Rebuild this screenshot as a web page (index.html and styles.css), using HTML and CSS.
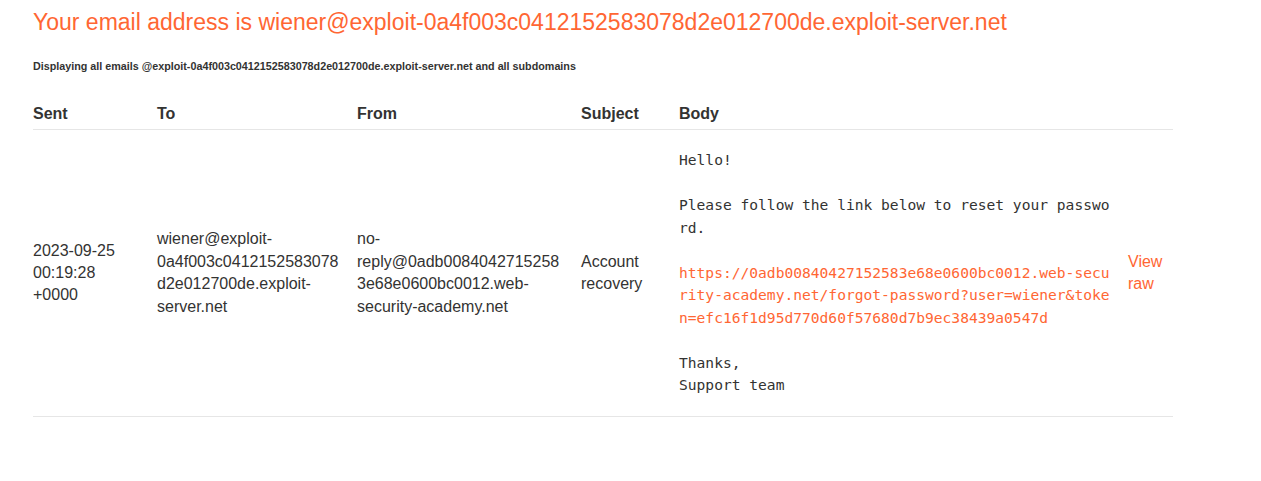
FILE: index.html
```html
<!DOCTYPE html>
<html>
<head>
<meta charset="utf-8">
<title>Exploit Server: Email client</title>
<link rel="stylesheet" href="styles.css">
</head>
<body>
<div class="container">
  <h1 class="title">Your email address is wiener@exploit-0a4f003c0412152583078d2e012700de.exploit-server.net</h1>
  <h6 class="subtitle">Displaying all emails @exploit-0a4f003c0412152583078d2e012700de.exploit-server.net and all subdomains</h6>
  <table class="emails">
    <colgroup>
      <col class="c-sent"><col class="c-to"><col class="c-from"><col class="c-subject"><col class="c-body"><col class="c-raw">
    </colgroup>
    <thead>
      <tr><th>Sent</th><th>To</th><th>From</th><th>Subject</th><th>Body</th><th></th></tr>
    </thead>
    <tbody>
      <tr>
        <td>2023-09-25 00:19:28 +0000</td>
        <td>wiener@exploit-0a4f003c0412152583078d2e012700de.exploit-server.net</td>
        <td>no-reply@0adb00840427152583e68e0600bc0012.web-security-academy.net</td>
        <td>Account recovery</td>
        <td><pre class="body-text">Hello!

Please follow the link below to reset your password.

<a class="link" href="#">https://0adb00840427152583e68e0600bc0012.web-security-academy.net/forgot-password?user=wiener&amp;token=efc16f1d95d770d60f57680d7b9ec38439a0547d</a>

Thanks,
Support team</pre></td>
        <td><a class="link" href="#">View raw</a></td>
      </tr>
    </tbody>
  </table>
</div>
</body>
</html>
```

FILE: styles.css
```css
html, body {
  margin: 0;
  padding: 0;
  background: #ffffff;
}

body {
  font-family: "Liberation Sans", Arial, sans-serif;
  color: #333332;
}

.container {
  padding: 0 33px;
}

.title {
  margin: 9px 0 0 0;
  font-size: 23px;
  line-height: 27px;
  font-weight: normal;
  color: #ff6633;
}

.subtitle {
  margin: 24px 0 0 0;
  font-size: 10.75px;
  line-height: 13px;
  font-weight: bold;
  color: #333332;
}

.emails {
  margin-top: 30px;
  width: 1140px;
  table-layout: fixed;
  border-collapse: collapse;
  border-spacing: 0;
}

.c-sent { width: 124px; }
.c-to { width: 200px; }
.c-from { width: 224px; }
.c-subject { width: 98px; }
.c-body { width: 449px; }
.c-raw { width: 45px; }

.emails th {
  text-align: left;
  font-size: 16px;
  line-height: 22.4px;
  font-weight: bold;
  padding: 0 15px 4px 0;
  border-bottom: 1px solid #e6e6e6;
}

.emails td {
  font-size: 16px;
  line-height: 22.4px;
  vertical-align: middle;
  padding: 19px 15px 19px 0;
  overflow-wrap: break-word;
  word-wrap: break-word;
  border-bottom: 1px solid #e6e6e6;
}

.emails td:last-child,
.emails th:last-child {
  padding-right: 0;
}

.body-text {
  margin: 0;
  font-family: "DejaVu Sans Mono", "Liberation Mono", monospace;
  font-size: 14.6px;
  line-height: 22.5px;
  white-space: pre-wrap;
  word-break: break-all;
  color: #333332;
}

.link {
  color: #ff6633;
  text-decoration: none;
}
```
